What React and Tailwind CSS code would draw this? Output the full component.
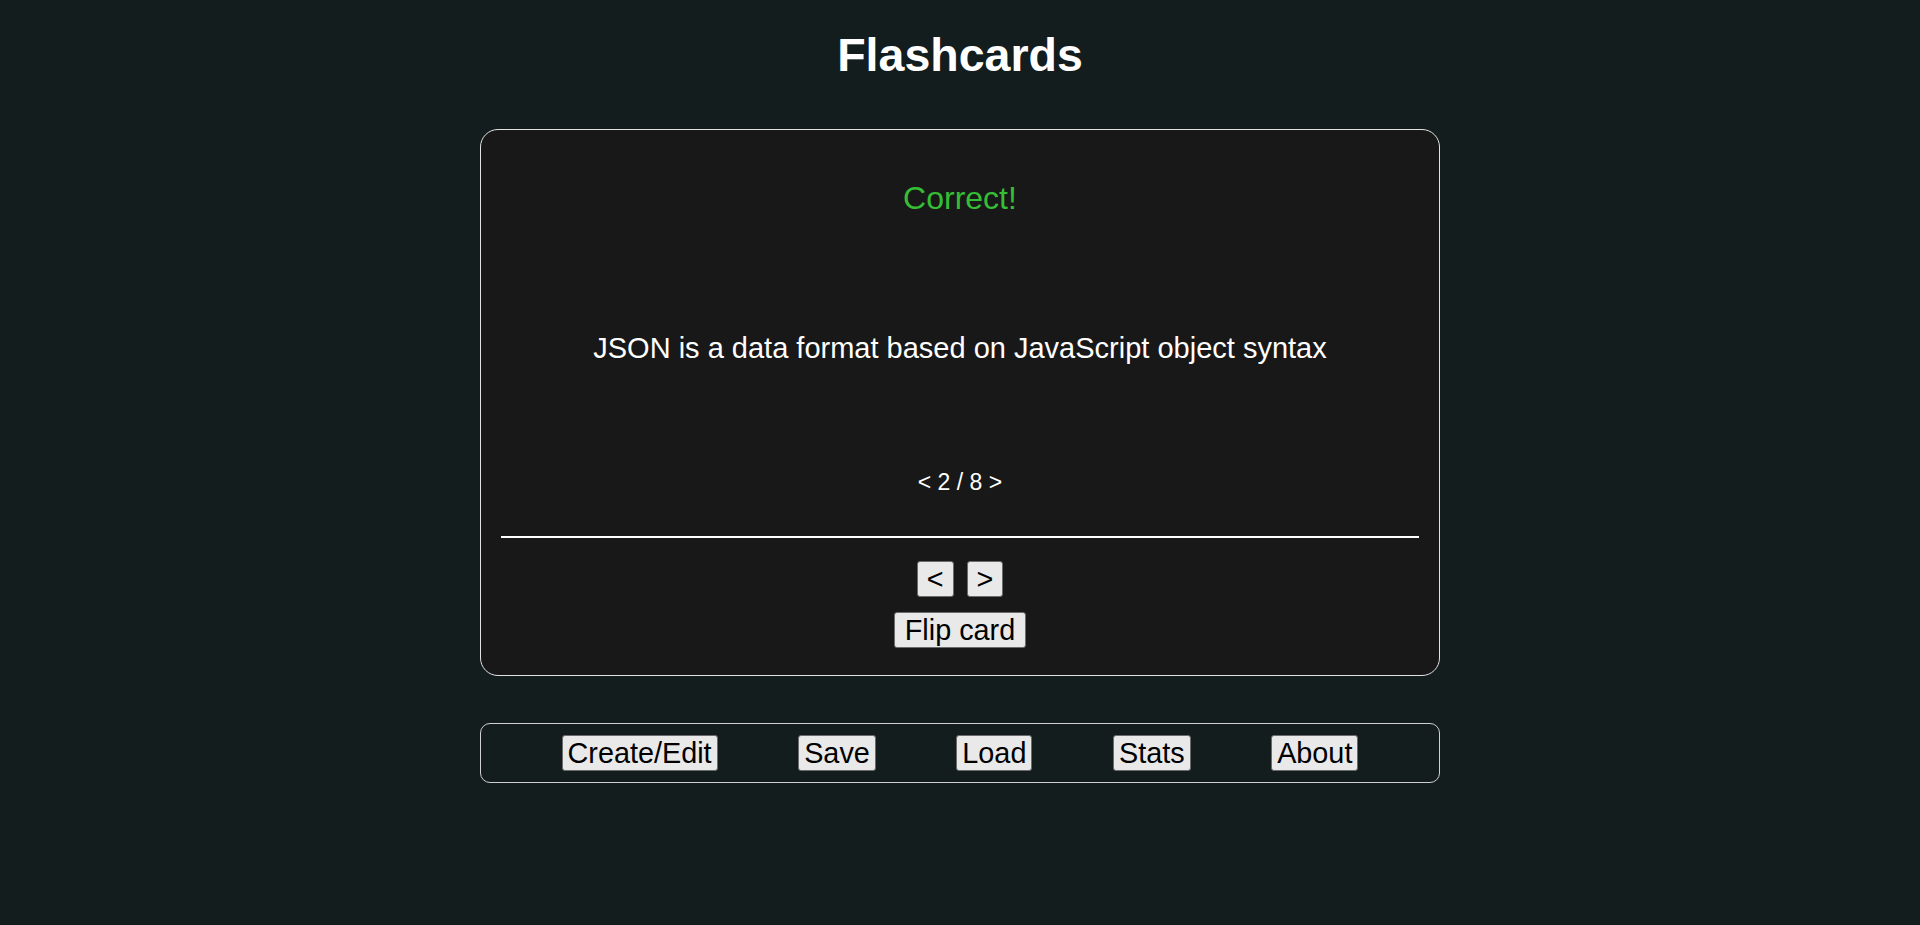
import React, { useState } from 'react';

const cards = [
    { front: 'What is JSON?', back: 'JSON is a data format based on JavaScript object syntax' },
];

const navItems = ['Create/Edit', 'Save', 'Load', 'Stats', 'About'];

const App = () => {
    const [index] = useState(1);
    const total = 8;

    return (
        <div className="min-h-screen bg-[#131d1e] text-white font-['Liberation_Sans',Arial,sans-serif] pt-[29px] pb-10">
            <h1 className="text-center text-[46.5px] leading-[53px] font-bold">Flashcards</h1>

            <div className="w-[960px] mx-auto mt-[47px] bg-[#181818] border border-[#e2e2e2] rounded-[18px] px-[20px] pb-[27px]">
                {/* card face */}
                <div className="pt-[50px] text-center">
                    <p className="text-[32px] leading-[37px] text-[#36bd36]">Correct!</p>
                    <p className="mt-[115px] text-[29px] leading-[33px]">{cards[0].back}</p>
                    <p className="mt-[104px] text-[23px] leading-[26px]">&lt; {index + 1} / {total} &gt;</p>
                </div>

                <div className="mt-[41px] h-[2px] bg-white"></div>

                {/* controls */}
                <div className="flex flex-col items-center mt-[23px] gap-[15px]">
                    <div className="flex gap-[13px]">
                        <button className="h-[36px] px-[9px] text-[28.8px] leading-[32px] text-black bg-[#e9e9e9] border border-[#6b6b6b] rounded-[3px]">&lt;</button>
                        <button className="h-[36px] px-[9px] text-[28.8px] leading-[32px] text-black bg-[#e9e9e9] border border-[#6b6b6b] rounded-[3px]">&gt;</button>
                    </div>
                    <button className="h-[36px] px-[10px] text-[28.8px] leading-[32px] text-black bg-[#e9e9e9] border border-[#6b6b6b] rounded-[3px]">Flip card</button>
                </div>
            </div>

            <div className="w-[960px] h-[60px] mx-auto mt-[47px] border border-[#d0d0d0] rounded-[10px] flex items-center justify-evenly">
                {navItems.map((item) => (
                    <button key={item} className="h-[36px] px-[5px] text-[28.8px] leading-[32px] text-black bg-[#e9e9e9] border border-[#6b6b6b] rounded-[3px]">
                        {item}
                    </button>
                ))}
            </div>
        </div>
    );
};

export default App;
